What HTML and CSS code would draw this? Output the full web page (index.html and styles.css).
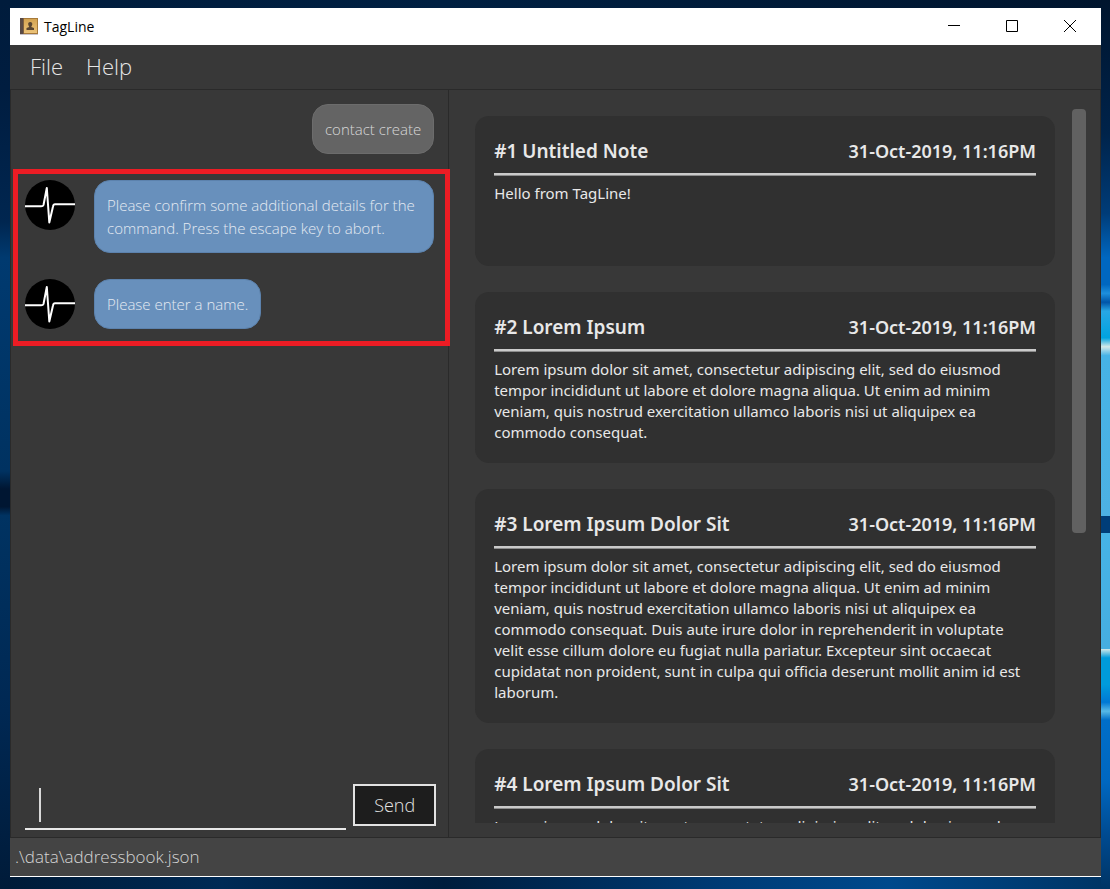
FILE: index.html
```html
<!DOCTYPE html>
<html lang="en">
<head>
<meta charset="utf-8">
<title>TagLine</title>
<link rel="stylesheet" href="styles.css">
</head>
<body>
<div class="window">
  <header class="titlebar">
    <svg class="app-icon" viewBox="0 0 18 17" aria-hidden="true">
      <defs><linearGradient id="book" x1="0" y1="0" x2="0" y2="1"><stop offset="0" stop-color="#d3a351"/><stop offset="1" stop-color="#ecc379"/></linearGradient></defs>
      <rect width="18" height="16" fill="#a77a3a"/>
      <rect x="4" y="1" width="13" height="14" fill="url(#book)"/>
      <rect width="3" height="16" fill="#594a45"/>
      <rect x="3" width="1" height="16" fill="#80613f"/>
      <rect y="16" width="18" height="1" fill="#c9c4cb"/>
      <path d="M10.2 4C8.600 4 8 5 8.200 6.300C8.300 7.500 9 8 9.200 9L6.500 10V12H14V10L11.300 9C11.500 8 12.200 7.500 12.300 6.300C12.500 5 11.800 4 10.200 4Z" fill="#594632"/>
    </svg>
    <h1 class="window-name">TagLine</h1>
    <div class="window-controls">
      <button class="control" aria-label="Minimize"><svg width="12" height="12" viewBox="0 0 12 12"><path d="M0 5.500H12"/></svg></button>
      <button class="control" aria-label="Maximize"><svg width="12" height="12" viewBox="0 0 12 12"><path d="M.5 .5H11.500V11.500H.5Z"/></svg></button>
      <button class="control" aria-label="Close"><svg width="12" height="12" viewBox="0 0 12 12"><path d="M0 0L12 12M12 0L0 12"/></svg></button>
    </div>
  </header>
  <nav class="menubar">
    <button class="menu">File</button>
    <button class="menu">Help</button>
  </nav>
  <main class="panes">
    <section class="chat" aria-label="Chat">
      <div class="messages">
        <p class="bubble bubble-user">contact create</p>
        <div class="replies">
          <div class="reply">
            <svg class="avatar" viewBox="0 0 50 50" aria-hidden="true"><circle cx="25" cy="25" r="25"/><path d="M0 26.300H15.500Q18 26.500 18.500 25L21.800 8L24.300 42.500L28 26.500Q28.400 24.300 30 24.300H50"/></svg>
            <p class="bubble bubble-bot">Please confirm some additional details for the command. Press the escape key to abort.</p>
          </div>
          <div class="reply">
            <svg class="avatar" viewBox="0 0 50 50" aria-hidden="true"><circle cx="25" cy="25" r="25"/><path d="M0 26.300H15.500Q18 26.500 18.500 25L21.800 8L24.300 42.500L28 26.500Q28.400 24.300 30 24.300H50"/></svg>
            <p class="bubble bubble-bot">Please enter a name.</p>
          </div>
          <div class="highlight"></div>
        </div>
      </div>
      <form class="composer">
        <div class="field"><span class="caret"></span><input class="command" type="text" aria-label="Command"></div>
        <button class="send" type="button">Send</button>
      </form>
    </section>
    <section class="notes" aria-label="Notes">
      <div class="note-list">
        <article class="note">
          <header class="note-head"><h2 class="note-title">#1 Untitled Note</h2><time class="note-time">31-Oct-2019, 11:16PM</time></header>
          <p class="note-text">Hello from TagLine!</p>
        </article>
        <article class="note">
          <header class="note-head"><h2 class="note-title">#2 Lorem Ipsum</h2><time class="note-time">31-Oct-2019, 11:16PM</time></header>
          <p class="note-text">Lorem ipsum dolor sit amet, consectetur adipiscing elit, sed do eiusmod tempor incididunt ut labore et dolore magna aliqua. Ut enim ad minim veniam, quis nostrud exercitation ullamco laboris nisi ut aliquipex ea commodo consequat.</p>
        </article>
        <article class="note">
          <header class="note-head"><h2 class="note-title">#3 Lorem Ipsum Dolor Sit</h2><time class="note-time">31-Oct-2019, 11:16PM</time></header>
          <p class="note-text">Lorem ipsum dolor sit amet, consectetur adipiscing elit, sed do eiusmod tempor incididunt ut labore et dolore magna aliqua. Ut enim ad minim veniam, quis nostrud exercitation ullamco laboris nisi ut aliquipex ea commodo consequat. Duis aute irure dolor in reprehenderit in voluptate velit esse cillum dolore eu fugiat nulla pariatur. Excepteur sint occaecat cupidatat non proident, sunt in culpa qui officia deserunt mollit anim id est laborum.</p>
        </article>
        <article class="note">
          <header class="note-head"><h2 class="note-title">#4 Lorem Ipsum Dolor Sit</h2><time class="note-time">31-Oct-2019, 11:16PM</time></header>
          <p class="note-text">Lorem ipsum dolor sit amet, consectetur adipiscing elit, sed do eiusmod</p>
        </article>
      </div>
      <div class="scrollbar"><div class="thumb"></div></div>
    </section>
  </main>
  <footer class="status">.\data\addressbook.json</footer>
</div>
</body>
</html>
```

FILE: styles.css
```css
* { box-sizing: border-box; }
html { height: 100%; }
body {
  margin: 0;
  height: 100%;
  padding: 8px 9px 12px 10px;
  font-family: "Open Sans", "Noto Sans", sans-serif;
  background:
    linear-gradient(180deg, #001c3c 0, #001d40 10%, #002650 25%, #003a70 29%, #003261 53%, #001632 55%, #001632 57%, #003362 58%, #002853 80%, #001b39 100%) left / 10px 100% no-repeat,
    linear-gradient(180deg, #00152e 0, #00234a 15%, #003c78 24%, #0067c0 29%, #0067c0 32%, #1d8fdc 33%, #0055a8 34%, #28a7e4 35%, #00a3e0 38%, #d4e9e8 39%, #46b3e6 40%, #4db1e3 58%, #003d78 58%, #003d78 60%, #46b3e6 60%, #46aee0 73%, #d4e9e8 73%, #009bdb 74%, #009bdb 77%, #0078d4 79%, #58b9e6 80%, #006ec8 81%, #0067c0 88%, #004a90 94%, #003464 100%) right / 9px 100% no-repeat,
    linear-gradient(90deg, #001c3c 0, #002042 40%, #00152e 100%) top / 100% 8px no-repeat,
    linear-gradient(90deg, #001a36 0, #002a55 20%, #001d3d 40%, #003b75 65%, #00498c 80%, #003464 100%);
}
h1, h2, p { margin: 0; }
button { font-family: inherit; cursor: pointer; }

.window {
  height: 100%;
  display: flex;
  flex-direction: column;
  background: #383838;
  border-bottom: 1px solid #fff;
}

.titlebar {
  display: flex;
  align-items: center;
  height: 37px;
  flex: none;
  padding: 0 2px 0 10px;
  gap: 6px;
  background: #fff;
}
.app-icon { width: 18px; height: 17px; }
.window-name { font-size: 14px; font-weight: 400; color: #000; }
.window-controls { display: flex; margin-left: auto; height: 100%; }
.control {
  width: 58px;
  padding: 0 0 2px;
  border: 0;
  background: none;
  display: grid;
  place-items: center;
}
.control path { fill: none; stroke: #000; }

.menubar {
  display: flex;
  flex: none;
  height: 45px;
  padding: 0 20px 2px;
  gap: 23px;
  border-bottom: 1px solid #2a2a2a;
}
.menu {
  padding: 0;
  border: 0;
  background: none;
  color: #e6e6e6;
  font-size: 22px;
  font-weight: 300;
}

.panes {
  flex: 1;
  min-height: 0;
  display: grid;
  grid-template-columns: 439fr 652fr;
  border-right: 1px solid #2a2a2a;
  border-left: 1px solid #2a2a2a;
  border-bottom: 1px solid #2a2a2a;
}
.chat {
  display: flex;
  flex-direction: column;
  justify-content: space-between;
  min-height: 0;
  padding: 14px 12px 7px 14px;
  border-right: 1px solid #2a2a2a;
}
.messages {
  display: flex;
  flex-direction: column;
  gap: 26px;
  padding-right: 2px;
}
.bubble {
  padding: 13px 12px 12px;
  border: 1px solid;
  border-radius: 16px;
  font-size: 15px;
  font-weight: 300;
  line-height: 23px;
}
.bubble-user { align-self: flex-end; background: #646464; border-color: #6c6c6c; color: #d8d8d8; }
.bubble-bot { background: #6890bc; border-color: #5c82ad; color: #e4eaf2; }
.replies {
  position: relative;
  display: flex;
  flex-direction: column;
  gap: 26px;
}
.reply { display: flex; align-items: flex-start; gap: 19px; }
.avatar { flex: none; width: 50px; height: 50px; }
.avatar path { fill: none; stroke: #fff; stroke-width: 2; stroke-linejoin: round; }
.highlight {
  position: absolute;
  inset: -11px -16px -17px -12px;
  border: 5px solid #ec1c24;
}

.composer { display: flex; align-items: flex-end; gap: 7px; }
.field {
  flex: 1;
  display: flex;
  align-items: center;
  height: 46px;
  padding: 0 0 2px 14px;
  border-bottom: 2px solid #e8e8e8;
}
.caret { width: 2px; height: 34px; background: #d8d8d8; }
.command {
  flex: 1;
  min-width: 0;
  height: 34px;
  padding: 0;
  border: 0;
  outline: 0;
  background: none;
  color: #fff;
  font: 300 18px "Open Sans", sans-serif;
}
.send {
  width: 83px;
  height: 42px;
  margin-bottom: 4px;
  border: 2px solid #e2e2e2;
  background: #1d1d1d;
  color: #e4e4e4;
  font-size: 18px;
  font-weight: 300;
}

.notes {
  display: flex;
  align-items: stretch;
  gap: 17px;
  min-height: 0;
  padding: 19px 14px 14px 26px;
}
.note-list {
  flex: 1;
  min-width: 0;
  overflow: hidden;
  display: flex;
  flex-direction: column;
  gap: 26px;
  padding-top: 7px;
}
.note {
  flex: none;
  min-height: 150px;
  padding: 20px 19px;
  border-radius: 14px;
  background: #303030;
  color: #e8e8e8;
  font-family: "Noto Sans", "Open Sans", sans-serif;
}
.note-head {
  display: flex;
  justify-content: space-between;
  margin-bottom: 1px;
  padding-bottom: 7px;
  border-bottom: 2px solid #cacaca;
  box-shadow: 0 1px #8c8c8c;
  line-height: 30px;
}
.note-title { font-size: 19px; font-weight: 600; }
.note-time { font-size: 18px; font-weight: 600; }
.note-text { padding-top: 7px; font-size: 15px; line-height: 21px; }
.scrollbar { width: 14px; }
.thumb { height: 424px; max-height: 60%; border-radius: 4px; background: #616161; }

.status {
  flex: none;
  height: 38px;
  padding-left: 5px;
  background: #444;
  color: #d4d4d4;
  font-size: 17px;
  font-weight: 300;
  line-height: 38px;
}
```
